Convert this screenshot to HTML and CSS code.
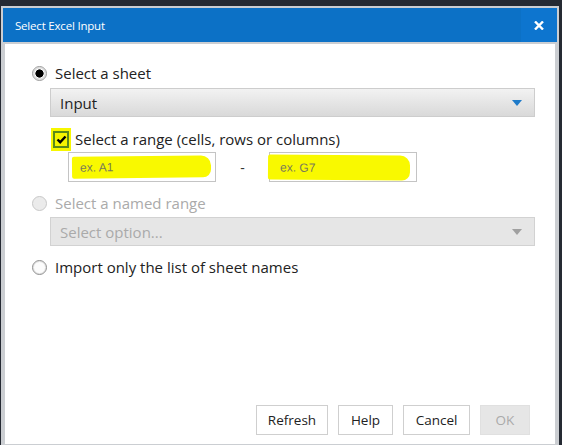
FILE: index.html
```html
<!DOCTYPE html>
<html>
<head>
<meta charset="utf-8">
<link rel="stylesheet" href="styles.css">
</head>
<body>
<div class="dialog">
  <div class="titlebar">
    <span class="title">Select Excel Input</span>
    <span class="close">
      <svg width="10" height="9" viewBox="0 0 10 9"><path d="M1 0.5 L9 8.5 M9 0.5 L1 8.5" stroke="#fff" stroke-width="2.4" fill="none"/></svg>
    </span>
  </div>
  <div class="frame">
    <div class="content">
      <div class="row row1">
        <span class="radio checked"></span>
        <span class="label">Select a sheet</span>
      </div>
      <div class="select sel1">
        <span class="sel-text">Input</span>
        <svg class="arrow" width="10" height="6" viewBox="0 0 10 6"><path d="M0 0 H10 L5 6 Z" fill="#1f7bc9"/></svg>
      </div>
      <div class="row row-check">
        <span class="check-hl"><span class="check">
          <svg width="11" height="9" viewBox="0 0 11 9"><path d="M1.5 4.5 L4.2 7.2 L9.5 1.5" stroke="#000" stroke-width="2.4" fill="none"/></svg>
        </span></span>
        <span class="label">Select a range (cells, rows or columns)</span>
      </div>
      <div class="range">
        <div class="inbox"><span class="hl hl1">ex. A1</span></div>
        <span class="dash">-</span>
        <div class="inbox"><span class="hl hl2">ex. G7</span></div>
      </div>
      <div class="row row2">
        <span class="radio disabled"></span>
        <span class="label dim">Select a named range</span>
      </div>
      <div class="select sel2">
        <span class="sel-text dim">Select option...</span>
        <svg class="arrow" width="10" height="6" viewBox="0 0 10 6"><path d="M0 0 H10 L5 6 Z" fill="#a0a0a0"/></svg>
      </div>
      <div class="row row3">
        <span class="radio"></span>
        <span class="label">Import only the list of sheet names</span>
      </div>
      <div class="buttons">
        <span class="btn b-refresh">Refresh</span>
        <span class="btn b-help">Help</span>
        <span class="btn b-cancel">Cancel</span>
        <span class="btn b-ok">OK</span>
      </div>
    </div>
  </div>
</div>
</body>
</html>
```
FILE: styles.css
```css
html, body {
  margin: 0;
  padding: 0;
  background: #252a33;
  height: 445px;
  overflow: hidden;
}
.dialog {
  margin: 6px 0 0 1px;
  width: 558px;
  height: 441px;
  box-sizing: border-box;
  background: #cbced2;
  border-top: 2px solid #cbced2;
  border-left: 2px solid #cbced2;
  border-right: 2px solid #cbced2;
  display: flex;
  flex-direction: column;
  font-family: "Open Sans", "Noto Sans", sans-serif;
}
.titlebar {
  height: 34px;
  background: #0c71c6;
  display: flex;
  align-items: center;
  justify-content: space-between;
  flex-shrink: 0;
}
.title {
  color: #fff;
  font-size: 11.5px;
  margin-left: 12px;
  letter-spacing: -0.2px;
}
.close {
  width: 36px;
  height: 34px;
  background: #0d75cf;
  display: flex;
  align-items: center;
  justify-content: center;
}
.frame {
  flex: 1;
  padding: 2px 2px 3px 2px;
  display: flex;
}
.content {
  flex: 1;
  background: #fff;
  display: flex;
  flex-direction: column;
  padding: 18px 20px 9px 27px;
}
.row {
  display: flex;
  align-items: center;
  height: 22px;
}
.label {
  font-size: 15px;
  color: #222;
  margin-left: 8px;
}
.radio {
  width: 15px;
  height: 15px;
  box-sizing: border-box;
  border-radius: 50%;
  border: 1px solid #8e8e8e;
  background: #fcfcfc;
  box-shadow: inset 0 0 0 1px #e2e2e2;
  flex-shrink: 0;
}
.radio.checked {
  border: 1px solid #9a9a9a;
  background: radial-gradient(circle, #000 0 3.8px, #fff 4.4px);
  box-shadow: inset 0 0 0 1.5px #dcdcdc;
}
.radio.disabled {
  border-color: #c8c8c8;
  background: #ebebeb;
  box-shadow: none;
}
.select {
  margin-top: 4px;
  margin-left: 18px;
  height: 29px;
  box-sizing: border-box;
  border: 1px solid #cfcfcf;
  display: flex;
  align-items: center;
  justify-content: space-between;
  padding: 0 12px 0 9px;
}
.sel1 {
  background: linear-gradient(#f2f2f2, #d9d9d9);
  border-color: #cdcdcd;
}
.sel2 {
  margin-top: 3px;
  background: #e6e6e6;
  border-color: #d2d2d2;
}
.sel-text {
  font-size: 15px;
  color: #222;
}
.label.dim, .sel-text.dim { color: #aaaaaa; }
.arrow { margin-top: 1px; }
.row-check {
  margin-top: 10px;
  height: 24px;
}
.check-hl {
  margin-left: 19px;
  width: 20px;
  height: 23px;
  background: #f7f700;
  display: flex;
  align-items: center;
  justify-content: center;
}
.check {
  width: 16px;
  height: 17px;
  box-sizing: border-box;
  border: 2px solid #5a8a1a;
  background: #f4f400;
  display: flex;
  align-items: center;
  justify-content: center;
}
.row-check .label { margin-left: 4px; }
.range {
  margin-top: 1px;
  margin-left: 36px;
  display: flex;
  align-items: center;
  height: 30px;
}
.inbox {
  width: 148px;
  height: 30px;
  box-sizing: border-box;
  border: 1px solid #c4c4c4;
  display: flex;
  align-items: center;
}
.hl {
  background: #f9f900;
  font-family: "Liberation Sans", Arial, sans-serif;
  font-size: 12px;
  color: #7a7a5a;
  height: 22px;
  display: flex;
  align-items: center;
  border-radius: 2px 10px 8px 2px;
}
.hl1 {
  margin-left: 3px;
  width: 131px;
  padding-left: 8px;
  transform: rotate(-0.6deg);
}
.hl2 {
  margin-left: -2px;
  width: 130px;
  padding-left: 12px;
  height: 25px;
  transform: rotate(0.5deg);
}
.dash {
  width: 53px;
  text-align: center;
  font-size: 14px;
  color: #333;
}
.row2 { margin-top: 10px; }
.row3 { margin-top: 10px; }
.buttons {
  margin-top: auto;
  margin-right: 5px;
  display: flex;
  justify-content: flex-end;
  gap: 10px;
}
.btn {
  height: 30px;
  box-sizing: border-box;
  border: 1px solid #cfcfcf;
  background: #fff;
  font-size: 13.5px;
  color: #222;
  display: flex;
  align-items: center;
  justify-content: center;
}
.b-refresh { width: 72px; }
.b-help { width: 55px; }
.b-cancel { width: 67px; }
.b-ok {
  width: 50px;
  background: #e6e6e6;
  border-color: #e0e0e0;
  color: #aaa;
}
```
